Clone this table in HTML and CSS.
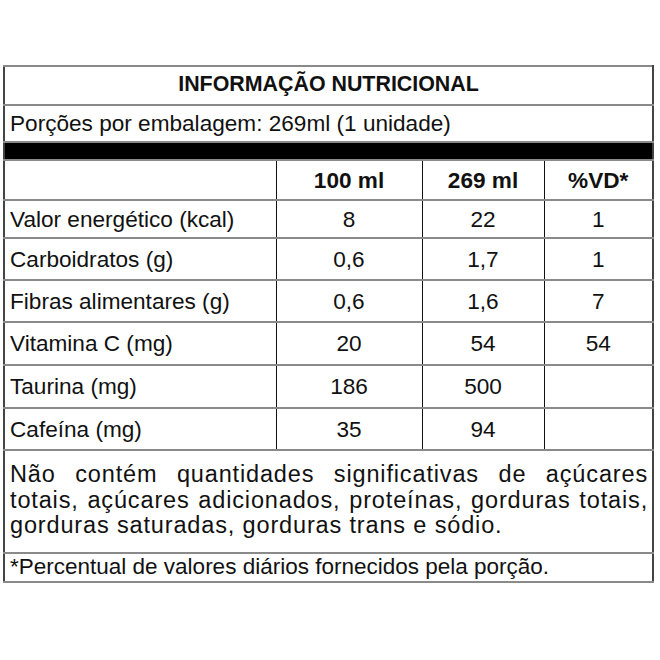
FILE: index.html
```html
<!DOCTYPE html>
<html lang="pt">
<head>
<meta charset="utf-8">
<link rel="stylesheet" href="styles.css">
</head>
<body>
<table class="nutri">
  <colgroup>
    <col class="c1"><col class="c2"><col class="c3"><col class="c4">
  </colgroup>
  <tr class="r-title"><td colspan="4" class="title">INFORMAÇÃO NUTRICIONAL</td></tr>
  <tr class="r-por"><td colspan="4" class="lbl">Porções por embalagem: 269ml (1 unidade)</td></tr>
  <tr class="r-bar"><td colspan="4" class="bar"></td></tr>
  <tr class="r-head">
    <td></td><td class="hd">100 ml</td><td class="hd">269 ml</td><td class="hd">%VD*</td>
  </tr>
  <tr class="r-a"><td class="lbl">Valor energético (kcal)</td><td class="v">8</td><td class="v">22</td><td class="v">1</td></tr>
  <tr class="r-b"><td class="lbl">Carboidratos (g)</td><td class="v">0,6</td><td class="v">1,7</td><td class="v">1</td></tr>
  <tr class="r-b"><td class="lbl">Fibras alimentares (g)</td><td class="v">0,6</td><td class="v">1,6</td><td class="v">7</td></tr>
  <tr class="r-c"><td class="lbl">Vitamina C (mg)</td><td class="v">20</td><td class="v">54</td><td class="v">54</td></tr>
  <tr class="r-c"><td class="lbl">Taurina (mg)</td><td class="v">186</td><td class="v">500</td><td class="v"></td></tr>
  <tr class="r-b"><td class="lbl">Cafeína (mg)</td><td class="v">35</td><td class="v">94</td><td class="v"></td></tr>
  <tr class="r-note"><td colspan="4" class="note"><span class="ln full">Não contém quantidades significativas de açúcares</span><span class="ln full">totais, açúcares adicionados, proteínas, gorduras totais,</span><span class="ln">gorduras saturadas, gorduras trans e sódio.</span></td></tr>
  <tr class="r-foot"><td colspan="4" class="foot">*Percentual de valores diários fornecidos pela porção.</td></tr>
</table>
</body>
</html>
```
FILE: styles.css
```css
html, body {
  margin: 0;
  padding: 0;
  background: #ffffff;
}
body {
  padding: 65px 0 0 3px;
  font-family: "Liberation Sans", Arial, sans-serif;
  color: #111111;
}
.nutri {
  width: 649px;
  table-layout: fixed;
  border-collapse: collapse;
  border: 2px solid #444444;
}
.c1 { width: 272px; }
.c2 { width: 146px; }
.c3 { width: 122px; }
.c4 { width: 109px; }
.nutri td {
  padding: 0;
  border-top: 2px solid #8a8a8a;
  border-bottom: 2px solid #8a8a8a;
  border-left: 1px solid #111111;
  border-right: 1px solid #111111;
  font-size: 22.6px;
  line-height: 25px;
  vertical-align: middle;
}
.nutri td[colspan] {
  border-left: 2px solid #444444;
  border-right: 2px solid #444444;
}
.r-title { height: 39px; }
.r-por { height: 37px; }
.r-bar { height: 18px; }
.r-head { height: 40px; }
.r-a { height: 38px; }
.r-b { height: 42px; }
.r-c { height: 43px; }
.r-note { height: 103px; }
.r-foot { height: 29px; }
.nutri .title {
  text-align: center;
  font-weight: bold;
  font-size: 21.4px;
  padding-bottom: 3px;
}
.nutri .lbl {
  padding-left: 5px;
  text-align: left;
}
.nutri .bar {
  background: #000000;
}
.nutri .hd {
  text-align: center;
  font-weight: bold;
}
.nutri .v {
  text-align: center;
}
.nutri .note {
  padding: 3px 4px 5px 5px;
  font-size: 23.5px;
  letter-spacing: 0.85px;
}
.ln {
  display: block;
  white-space: nowrap;
  line-height: 25.5px;
  text-align: left;
}
.ln.full {
  text-align: justify;
  text-align-last: justify;
}
.nutri .foot {
  padding-left: 5px;
  font-size: 22.5px;
  padding-bottom: 2px;
}
```
